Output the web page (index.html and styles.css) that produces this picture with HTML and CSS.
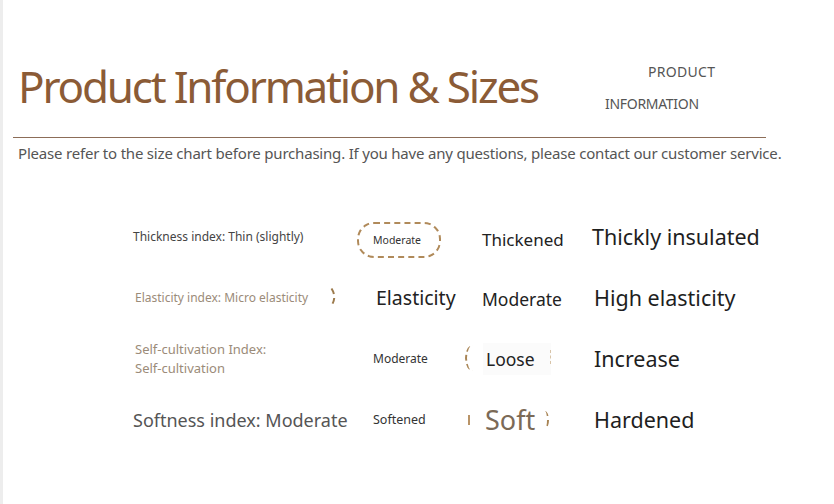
FILE: index.html
```html
<!DOCTYPE html>
<html lang="en">
<head>
<meta charset="utf-8">
<title>Product Information &amp; Sizes</title>
<link rel="stylesheet" href="styles.css">
</head>
<body>
<div class="page">
  <header class="header">
    <h1 class="title">Product Information &amp; Sizes</h1>
    <div class="tag">
      <span class="tag-line tag-1">PRODUCT</span>
      <span class="tag-line tag-2">INFORMATION</span>
    </div>
  </header>
  <div class="rule"></div>
  <p class="note">Please refer to the size chart before purchasing. If you have any questions, please contact our customer service.</p>

  <div class="chart">
    <div class="cell label l1">Thickness index: Thin (slightly)</div>
    <div class="cell c2 pill-cell"><span class="pill">Moderate</span></div>
    <div class="cell c3 v-thickened">Thickened</div>
    <div class="cell c4 big first">Thickly insulated</div>

    <div class="cell label l2">Elasticity index: Micro elasticity<svg class="arc-el" width="8" height="20" viewBox="0 0 8 20"><path d="M1.5 1.5 Q7 10 1.5 18.5" fill="none" stroke="#9c7a4c" stroke-width="2" stroke-dasharray="6 4"/></svg></div>
    <div class="cell c2 v-elasticity">Elasticity</div>
    <div class="cell c3 v-moderate">Moderate</div>
    <div class="cell c4 big">High elasticity</div>

    <div class="cell label l3">Self-cultivation Index:<br>Self-cultivation</div>
    <div class="cell c2 small">Moderate</div>
    <div class="cell c3"><span class="loose">Loose</span></div>
    <div class="cell c4 big">Increase</div>

    <div class="cell label l4">Softness index: Moderate</div>
    <div class="cell c2 small softened">Softened</div>
    <div class="cell c3"><span class="soft">Soft</span></div>
    <div class="cell c4 big">Hardened</div>
  </div>
</div>
</body>
</html>
```

FILE: styles.css
```css
html, body {
  margin: 0;
  padding: 0;
  background: #ffffff;
}

body {
  font-family: "Noto Sans", "Open Sans", sans-serif;
  color: #333;
  border-left: 3px solid #ededed;
  min-height: 504px;
  box-sizing: border-box;
}

.page {
  width: 831px;
}

.header {
  display: flex;
  align-items: flex-start;
  padding-top: 56px;
  height: 81px;
}

.title {
  margin: 0 0 0 15px;
  font-weight: 400;
  font-size: 44px;
  line-height: 60px;
  color: #8b5b36;
  letter-spacing: -2.2px;
  width: 587px;
  white-space: nowrap;
}

.tag {
  display: flex;
  flex-direction: column;
  margin-top: 0;
}

.tag-line {
  font-size: 14px;
  line-height: 32px;
  color: #555;
}

.tag-1 { padding-left: 43px; letter-spacing: 0.3px; }
.tag-2 { letter-spacing: -0.3px; }

.rule {
  margin-left: 10px;
  width: 753px;
  height: 1px;
  background: #8c6d58;
}

.note {
  margin: 5px 0 0 15px;
  font-size: 15px;
  line-height: 20px;
  color: #555;
  letter-spacing: -0.2px;
  white-space: nowrap;
}

.chart {
  display: grid;
  grid-template-columns: 224px 125px 110px 1fr;
  grid-auto-rows: 61px;
  margin-top: 43px;
  padding-left: 130px;
  align-items: center;
}

.cell {
  color: #222;
  white-space: nowrap;
}

.label { position: relative; }

.l1 { font-size: 12px; color: #444; }
.l2 { font-size: 12px; color: #9b8b79; padding-left: 2px; }
.l3 { font-size: 13px; color: #9b8b79; line-height: 19px; padding-left: 2px; }
.l4 { font-size: 18px; color: #555; }

.small { font-size: 12px; color: #333; padding-left: 16px; }
.softened { font-size: 12.5px; }

.pill-cell { padding-top: 7px; }

.pill {
  display: inline-block;
  font-size: 10.5px;
  color: #333;
  padding: 0 14px;
  height: 32px;
  line-height: 32px;
  border: 2px dashed #b08a5a;
  border-radius: 17px;
  width: 52px;
}

.v-thickened { font-size: 17px; padding-top: 5px; }
.v-elasticity { font-size: 19.5px; padding-left: 19px; }
.v-moderate { font-size: 17.5px; padding-top: 3px; }

.big { font-size: 21.5px; color: #1e1e1e; padding-left: 2px; }
.big.first { padding-left: 0; }

.arc-el {
  position: absolute;
  left: 197px;
  top: -2px;
}

.loose {
  position: relative;
  display: inline-block;
  font-size: 17.5px;
  color: #222;
  padding: 4px 16px 4px 3px;
  margin-left: 1px;
  background: #fbfbfb;
}

.loose::before {
  content: "";
  position: absolute;
  left: -18px;
  top: 2px;
  width: 14px;
  height: 26px;
  border-left: 2px dashed #a88454;
  border-radius: 50%;
}

.loose::after {
  content: "";
  position: absolute;
  right: 0;
  top: 7px;
  width: 2px;
  height: 14px;
  border-right: 1px dashed #d8c4a8;
}

.soft {
  position: relative;
  display: inline-block;
  font-size: 27px;
  color: #7b6a57;
  padding: 0 14px 0 3px;
}

.soft::before {
  content: "";
  position: absolute;
  left: -14px;
  top: 14px;
  width: 2px;
  height: 10px;
  border-left: 2px dashed #b99467;
}

.soft::after {
  content: "";
  position: absolute;
  right: 0;
  top: 10px;
  width: 6px;
  height: 18px;
  border-right: 2px dashed #a88454;
  border-radius: 50%;
}
```
